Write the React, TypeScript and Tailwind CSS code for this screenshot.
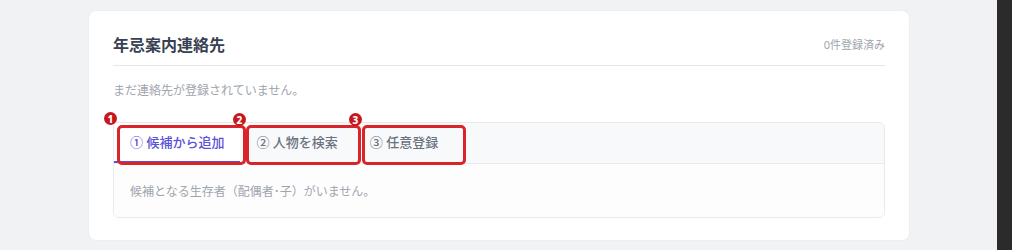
import React from "react";

const font = { fontFamily: '"Noto Sans", "Noto Sans CJK JP", sans-serif' };

function Badge({ n, left, top }: { n: number; left: number; top: number }) {
  return (
    <div
      className="absolute flex h-[13px] w-[13px] items-center justify-center rounded-full bg-[#c8161d] text-[10px] font-extrabold leading-none text-white"
      style={{ left, top }}
    >
      {n}
    </div>
  );
}

function Box({ left, top, width, height }: { left: number; top: number; width: number; height: number }) {
  return (
    <div
      className="pointer-events-none absolute rounded-[5px] border-[3px] border-[#d9242a]"
      style={{ left, top, width, height }}
    />
  );
}

export default function App() {
  return (
    <div className="relative flex h-[250px] w-[1012px] overflow-hidden bg-[#f1f2f4]" style={font}>
      <div className="flex-1 pl-[88px] pt-[10px]">
        <div className="h-[231px] w-[822px] rounded-lg border border-[#eceef1] bg-white px-6">
          <div className="flex items-center justify-between border-b border-[#e5e7eb] pb-[9px] pt-[23px]">
            <div className="text-[16px] font-semibold leading-[22px] text-[#374151]">年忌案内連絡先</div>
            <div className="text-[11px] leading-[22px] text-[#a0a5ad]">0件登録済み</div>
          </div>
          <div className="mt-[16px] text-[12px] leading-[18px] text-[#a0a5ad]">まだ連絡先が登録されていません。</div>
          <div className="mt-[22px] overflow-hidden rounded-md border border-[#e8eaed]">
            <div className="flex h-[41px] border-b border-[#e8eaed] bg-[#f8f9fb]">
              <div className="flex items-center border-b-2 border-[#5b50d6] bg-white px-4 pt-[2px] text-[13px] font-medium text-[#5b50d6]">
                ① 候補から追加
              </div>
              <div className="flex items-center px-4 text-[13px] font-medium text-[#6b7280]">② 人物を検索</div>
              <div className="flex items-center px-4 text-[13px] font-medium text-[#6b7280]">③ 任意登録</div>
            </div>
            <div className="flex h-[53px] items-center bg-[#fdfdfd] px-4 pt-[3px] text-[12px] text-[#a0a5ad]">
              候補となる生存者（配偶者･子）がいません。
            </div>
          </div>
        </div>
      </div>
      <div className="w-[15px] bg-[#2b2b2b]" />

      <Box left={117} top={125} width={129} height={40} />
      <Box left={246} top={125} width={115} height={40} />
      <Box left={362} top={125} width={104} height={40} />
      <Badge n={1} left={104} top={112} />
      <Badge n={2} left={233} top={113} />
      <Badge n={3} left={349} top={113} />
    </div>
  );
}
